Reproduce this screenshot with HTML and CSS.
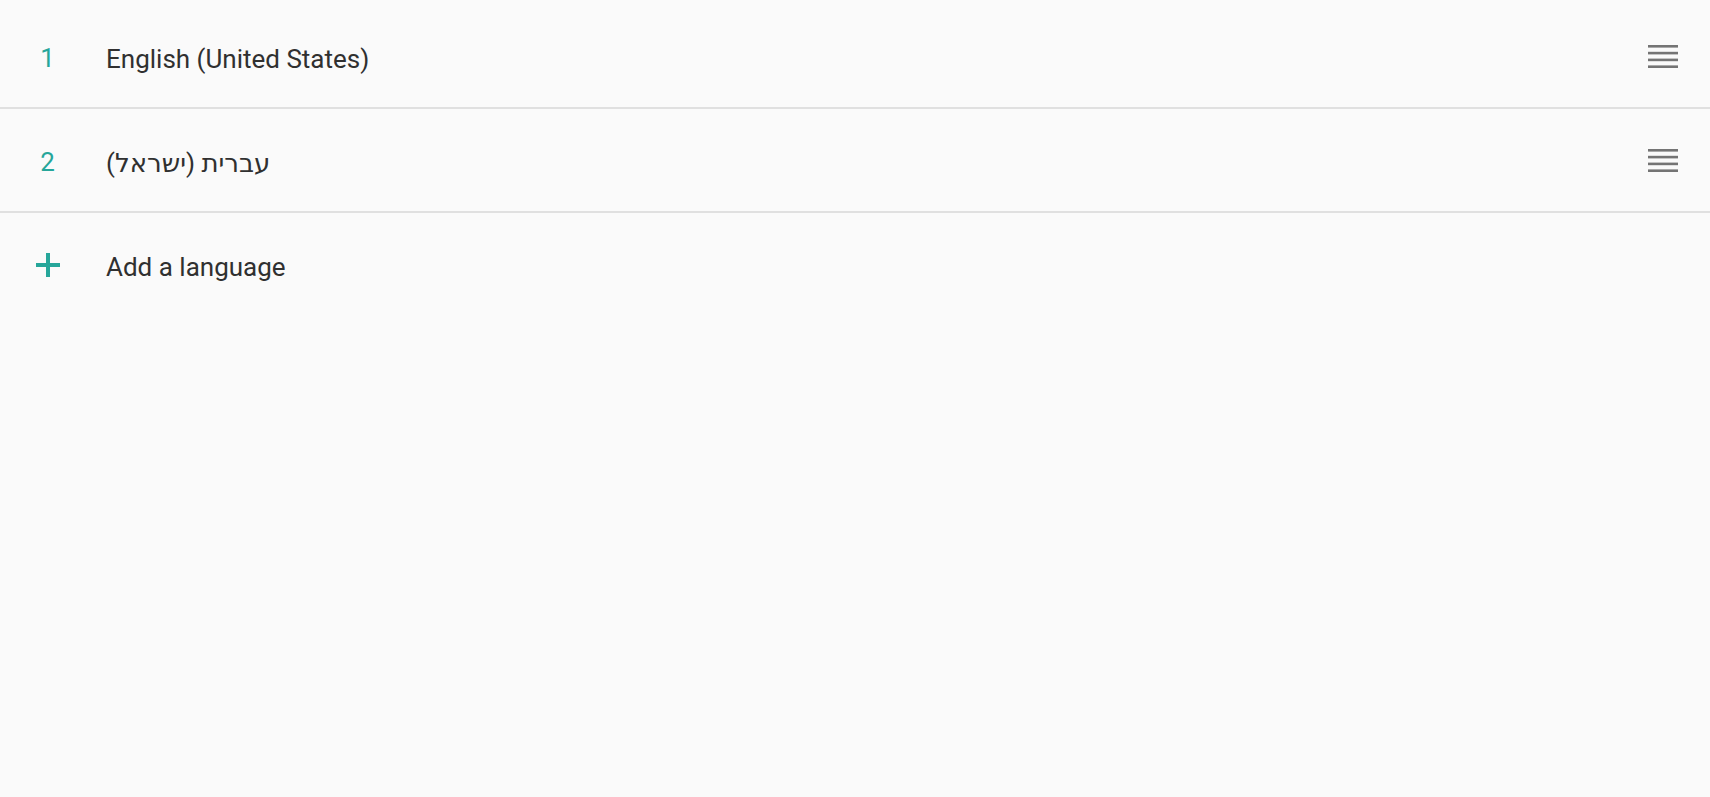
FILE: index.html
```html
<!DOCTYPE html>
<html lang="en">
<head>
<meta charset="utf-8">
<title>Languages</title>
<link rel="stylesheet" href="styles.css">
</head>
<body>
<div class="list">
  <div class="row bordered">
    <div class="lead num">1</div>
    <div class="label">English (United States)</div>
    <div class="handle">
      <svg width="30" height="23" viewBox="0 0 30 23"><rect x="0" y="0" width="30" height="2.6"/><rect x="0" y="6.8" width="30" height="2.6"/><rect x="0" y="13.6" width="30" height="2.6"/><rect x="0" y="20.4" width="30" height="2.6"/></svg>
    </div>
  </div>
  <div class="row bordered">
    <div class="lead num">2</div>
    <div class="label"><span class="rtl" dir="rtl">עברית (ישראל)</span></div>
    <div class="handle">
      <svg width="30" height="23" viewBox="0 0 30 23"><rect x="0" y="0" width="30" height="2.6"/><rect x="0" y="6.8" width="30" height="2.6"/><rect x="0" y="13.6" width="30" height="2.6"/><rect x="0" y="20.4" width="30" height="2.6"/></svg>
    </div>
  </div>
  <div class="row">
    <div class="lead">
      <svg width="24" height="24" viewBox="0 0 24 24"><rect x="10" y="0" width="4" height="24"/><rect x="0" y="10" width="24" height="4"/></svg>
    </div>
    <div class="label">Add a language</div>
  </div>
</div>
</body>
</html>
```

FILE: styles.css
```css
html, body {
  margin: 0;
  padding: 0;
  background: #fafafa;
}
body {
  font-family: Roboto, "Noto Sans", "DejaVu Sans", sans-serif;
  color: #303030;
}
.list {
  padding-top: 5px;
}
.row {
  display: flex;
  align-items: center;
  height: 102px;
  padding: 0 32px 0 0;
}
.bordered {
  border-bottom: 2px solid #e0e0e0;
}
.lead {
  width: 95px;
  flex: 0 0 95px;
  display: flex;
  justify-content: center;
  color: #26a69a;
  font-size: 26px;
  padding-top: 4px;
}
.lead svg {
  fill: #26a69a;
  margin-top: -3px;
}
.label {
  flex: 1;
  font-size: 26px;
  padding-top: 5px;
  padding-left: 11px;
  text-align: left;
}
.rtl {
  display: inline-block;
  direction: rtl;
  unicode-bidi: isolate;
}
.handle {
  display: flex;
  align-items: center;
}
.handle svg {
  fill: #747474;
}
```
